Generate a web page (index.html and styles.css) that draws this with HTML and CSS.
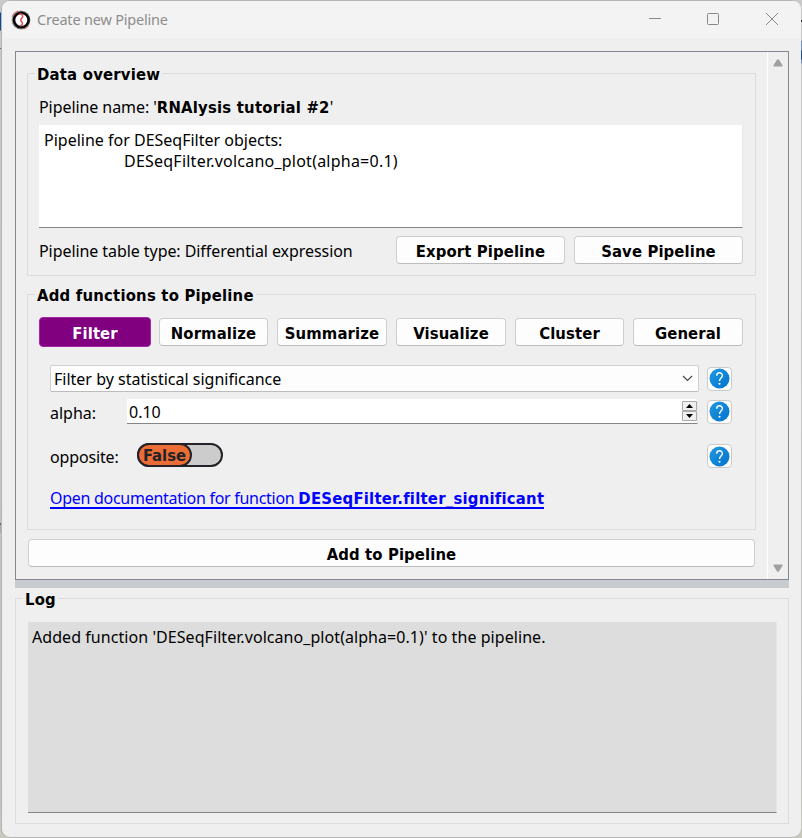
FILE: index.html
```html
<!DOCTYPE html>
<html lang="en">
<head>
<meta charset="utf-8">
<title>Create new Pipeline</title>
<link rel="stylesheet" href="styles.css">
</head>
<body>
<svg class="defs" width="0" height="0" aria-hidden="true">
  <defs>
    <linearGradient id="blue" x1="0" y1="0" x2="1" y2="1"><stop offset="0" stop-color="#2299e2"/><stop offset="1" stop-color="#0072ce"/></linearGradient>
    <symbol id="help" viewBox="0 0 21 21">
      <circle cx="10.5" cy="10.5" r="10" fill="url(#blue)"/>
      <path d="M7.7 7.800C7.700 3.800 13.400 3.900 13.400 7.500c0 2.600-2.900 2.600-2.900 5.500" fill="none" stroke="#fff" stroke-width="1.4"/>
      <circle cx="10.5" cy="15.8" r="1.05" fill="#fff"/>
    </symbol>
  </defs>
</svg>
<div class="window">
  <header class="titlebar">
    <svg class="logo" width="20" height="20" viewBox="0 0 20 20">
      <circle cx="10" cy="10" r="9.400" fill="#8a8a8a"/>
      <circle cx="10.3" cy="10" r="7.300" fill="#fff" stroke="#090909" stroke-width="2.600"/>
      <path d="M1 6.500A9.500 9.500 0 0 1 7 .8M13 19a9.500 9.500 0 0 0 5-3.500" fill="none" stroke="#e66a70" stroke-width="1"/>
      <path d="M8 4.200c3.500-.8 5 1.800 2.500 4.300-2.500 2.500 1.500 3 .8 5.500-.3 1.200-1.300 1.800-2.300 2" fill="none" stroke="#e54952" stroke-width="1.500"/>
    </svg>
    <span class="title">Create new Pipeline</span>
    <svg class="controls" width="132" height="16" viewBox="0 0 132 16" fill="none" stroke="#888" stroke-width="1">
      <path d="M1 6.500h12"/>
      <rect x="59.500" y="1.500" width="11" height="11" rx="1"/>
      <path d="M118 1l12 12M130 1l-12 12"/>
    </svg>
  </header>
  <main class="scroll">
    <div class="content">
      <section class="group overview">
        <h2 class="legend">Data overview</h2>
        <p class="name"><span class="snug">Pipeline name: '</span><b>RNAlysis tutorial #2</b>'</p>
        <div class="preview"><div>Pipeline for DESeqFilter objects:</div><div class="step">DESeqFilter.volcano_plot(alpha=0.1)</div></div>
        <div class="actions">
          <span class="type snug">Pipeline table type: Differential expression</span>
          <button class="wide">Export Pipeline</button>
          <button class="wide">Save Pipeline</button>
        </div>
      </section>
      <section class="group functions">
        <h2 class="legend">Add functions to Pipeline</h2>
        <nav class="tabs">
          <button class="active">Filter</button>
          <button>Normalize</button>
          <button>Summarize</button>
          <button>Visualize</button>
          <button>Cluster</button>
          <button>General</button>
        </nav>
        <div class="row pick">
          <div class="combo"><span>Filter by statistical significance</span>
            <svg width="11" height="7" viewBox="0 0 11 7"><path d="M1 1l4.500 4.500L10 1" fill="none" stroke="#444" stroke-width="1.100"/></svg>
          </div>
          <span class="help"><svg width="21" height="21"><use href="#help"/></svg></span>
        </div>
        <div class="row alpha">
          <label>alpha:</label>
          <div class="spin"><span>0.10</span>
            <svg width="15" height="20" viewBox="0 0 15 20"><path d="M.5.5h14v9H.5zM.5 10.500h14v9H.5z" fill="#f0f0f0" stroke="#aaa"/><path d="M4 7l3.500-4L11 7zM4 13h7l-3.500 4z" fill="#000"/></svg>
          </div>
          <span class="help"><svg width="21" height="21"><use href="#help"/></svg></span>
        </div>
        <div class="row opposite">
          <label>opposite:</label>
          <div class="toggle"><div class="knob">False</div></div>
          <span class="help"><svg width="21" height="21"><use href="#help"/></svg></span>
        </div>
        <a class="doc"><span>Open documentation for function </span><b>DESeqFilter.filter_significant</b></a>
      </section>
      <button class="submit">Add to Pipeline</button>
    </div>
    <div class="bar">
      <svg width="10" height="8" viewBox="0 0 10 8"><path d="M.5 6.200L4 .8Q5-.3 6 .8l3.500 5.400Q9.800 7.500 8.500 7.500h-7Q.2 7.500.5 6.200z" fill="#a0a0a0"/></svg>
      <svg width="10" height="8" viewBox="0 0 10 8"><path d="M.5 1.800L4 7.200q1 1.100 2 0l3.500-5.400Q9.800.5 8.500.5h-7Q.2.5.5 1.800z" fill="#a0a0a0"/></svg>
    </div>
  </main>
  <div class="splitter"></div>
  <section class="group log">
    <h2 class="legend">Log</h2>
    <div class="output"><span>Added function 'DESeqFilter.volcano_plot(alpha=0.1)' to the pipeline.</span></div>
  </section>
</div>
</body>
</html>
```
FILE: styles.css
```css
* { box-sizing: border-box; }
body {
  margin: 0;
  height: 838px;
  overflow: hidden;
  background:
    linear-gradient(#0000 12px, #0b48a0 13px 30px, #0000 31px 48px, #666 48px 49px, #0000 49px 523px, #666 523px 525px, #aaa 525px 533px, #0000 533px) 0 0 / 2px 100% no-repeat,
    linear-gradient(#0000 20px, #333 20px 22px, #0000 22px 40px, #7090c8 41px 50px, #1c4c94 51px 59px, #7090c8 60px 63px, #0000 64px) 100% 0 / 1px 100% no-repeat,
    linear-gradient(#c9c9c9, #c2c2c2 92%, #c8c8bc);
  font: 16px/21px "Noto Sans", sans-serif;
  color: #000;
}
.defs { display: block; height: 0; }
.window {
  display: flex;
  flex-direction: column;
  width: 800px;
  height: 838px;
  margin-left: 1px;
  padding: 0 13px 0 14px;
  background: #efefef;
  border: 1px solid #b5b5b5;
  border-right: 0;
  border-radius: 9px;
}
.titlebar {
  display: flex;
  align-items: center;
  height: 37px;
  margin: 0 -13px 13px -14px;
  padding: 0 21px 0 9px;
  background: #f3f3f3;
  border-radius: 8px 8px 0 0;
}
.title {
  flex: 1;
  margin-left: 6px;
  color: #8d8d8d;
  font-size: 14.5px;
  letter-spacing: -.2px;
}
p, h2 { margin: 0; }
b, h2, button {
  font-family: "DejaVu Sans Condensed", "DejaVu Sans", sans-serif;
  font-stretch: condensed;
  font-weight: bold;
  font-size: 16.5px;
  letter-spacing: .22px;
}
b { line-height: 20px; }
span, b, label { white-space: pre; }
.snug { letter-spacing: -.07px; }
.scroll {
  display: flex;
  height: 529px;
  border: 1px solid #828790;
  margin: 0 -1px;
}
.content { width: 751px; padding: 21px 11px 0; }
.bar {
  display: flex;
  flex: 1;
  flex-direction: column;
  align-items: center;
  justify-content: space-between;
  padding: 7px 1px 7px 0;
  border-left: 1px solid #fff;
}
.group {
  display: flex;
  flex-direction: column;
  border: 1px solid #dcdcdc;
}
.legend {
  align-self: flex-start;
  height: 21px;
  margin: -10px 0 0 7px;
  padding: 0 2px;
  background: #efefef;
  line-height: 21px;
}
.overview { height: 203px; padding: 0 12px 0 11px; }
.overview .legend, .functions .legend { margin-left: -4px; }
.name { margin-top: 12px; height: 21px; }
.preview {
  height: 103px;
  margin-top: 7px;
  padding: 5px;
  background: #fff;
  border-right: 1px solid #e8e8e8;
  border-bottom: 1px solid #868686;
}
.step { padding-left: 80px; letter-spacing: .23px; }
.actions { display: flex; align-items: center; gap: 9px; margin-top: 8px; }
.type { flex: 1; padding-top: 2px; }
button {
  padding: 2px 0 0;
  height: 28px;
  color: #000;
  background: #fdfdfd;
  border: 1px solid #cfcfcf;
  border-bottom-color: #bcbcbc;
  border-radius: 4px;
  letter-spacing: .12px;
}
.wide { width: 169px; }
.functions { height: 236px; margin-top: 18px; padding: 0 12px 0 11px; }
.tabs {
  display: grid;
  grid-template-columns: 111px 109px 110px 110px 109px 110px;
  gap: 9px;
  align-items: center;
  height: 30px;
  margin-top: 11px;
}
.active { width: 112px; height: 30px; color: #fff; background: #800080; border-color: #a626a6; }
.row { display: flex; align-items: center; justify-content: space-between; margin: 0 11px; }
.combo {
  display: flex;
  align-items: center;
  justify-content: space-between;
  width: 649px;
  height: 27px;
  padding: 0 5px 0 3px;
  background: #fdfdfd;
  border: 1px solid #cfcfcf;
  border-bottom-color: #bcbcbc;
  border-radius: 2px;
}
.combo span, .spin span { padding-top: 2px; }
.pick { height: 27px; margin-top: 18px; }
.help {
  display: grid;
  place-items: center;
  width: 25px;
  height: 24px;
  background: #fdfdfd;
  border: 1px solid #cbcbcb;
  border-radius: 4px;
}
.help svg { display: block; }
.alpha { height: 25px; margin-top: 7px; }
.row label { width: 77px; padding-top: 3px; }
.spin {
  display: flex;
  flex: 1;
  align-items: center;
  justify-content: space-between;
  height: 25px;
  margin-right: 9px;
  padding-left: 2px;
  background: #fff;
  border-right: 1px solid #e8e8e8;
  border-bottom: 1px solid #868686;
}
.opposite { height: 24px; margin-top: 20px; }
.row.opposite label { width: 87px; padding-top: 2px; letter-spacing: -.15px; }
.toggle {
  width: 86px;
  height: 24px;
  margin: -2px auto 0 0;
  background: #ccc;
  border: 2px solid #222228;
  border-radius: 12px;
}
.knob {
  width: 55px;
  height: 24px;
  margin: -2px;
  background: #eb6d35;
  border: 2px solid #222228;
  border-radius: 12px;
  color: #222228;
  font: bold 16.5px/22px "DejaVu Sans Condensed", "DejaVu Sans", sans-serif;
  font-stretch: condensed;
  text-align: center;
}
.doc {
  align-self: flex-start;
  height: 21px;
  margin: 20px 0 0 11px;
  color: #00f;
  border-bottom: 2px solid #00f;
  white-space: nowrap;
}
.doc span { letter-spacing: -.28px; }
.doc b { letter-spacing: .24px; }
.submit { display: block; width: 727px; margin: 9px 0 0 1px; }
.splitter { height: 8px; margin: 0 -1px; background: #c8cccf; }
.log { height: 226px; margin: 10px -1px 0; padding: 0 11px 0 12px; }
.log .legend { margin-left: -5px; }
.output {
  height: 191px;
  margin-top: 12px;
  padding: 5px 4px;
  background: #ddd;
  border-right: 1px solid #e6e6e6;
  border-bottom: 1px solid #868686;
  letter-spacing: .06px;
}
```
